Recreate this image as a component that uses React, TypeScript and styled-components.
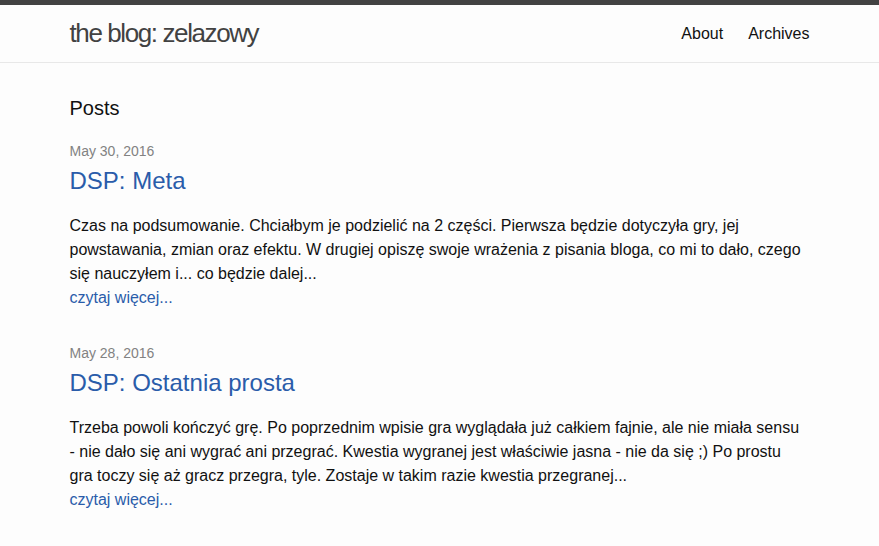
import React from "react";
import styled, { createGlobalStyle } from "styled-components";

const Global = createGlobalStyle`
  html, body { margin: 0; padding: 0; }
  body {
    background: #fdfdfd;
    color: #111;
    font-family: "Liberation Sans", Arial, Helvetica, sans-serif;
    font-size: 16px;
    line-height: 1.5;
    -webkit-font-smoothing: antialiased;
  }
`;

const Header = styled.header`
  border-top: 5px solid #424242;
  border-bottom: 1px solid #e8e8e8;
  min-height: 56px;
`;

const Wrapper = styled.div`
  max-width: 740px;
  margin: 0 auto;
  padding: 0 30px;
`;

const HeaderRow = styled(Wrapper)`
  display: flex;
  justify-content: space-between;
  align-items: center;
  height: 57px;
`;

const SiteTitle = styled.a`
  font-size: 26px;
  font-weight: 300;
  letter-spacing: -1.4px;
  line-height: 57px;
  color: #424242;
  text-decoration: none;
`;

const Nav = styled.nav`
  display: flex;
  gap: 25px;
  line-height: 57px;
`;

const PageLink = styled.a`
  color: #111;
  text-decoration: none;
  font-size: 16px;
`;

const Main = styled.main`
  padding: 30px 0;
`;

const PageHeading = styled.h1`
  font-size: 20px;
  font-weight: 400;
  line-height: 30px;
  margin: 0 0 16px;
`;

const PostList = styled.ul`
  list-style: none;
  margin: 0;
  padding: 0;
`;

const PostItem = styled.li`
  margin-bottom: 31px;
`;

const PostMeta = styled.span`
  display: block;
  font-size: 14px;
  line-height: 24px;
  color: #828282;
`;

const PostTitle = styled.h2`
  font-size: 24px;
  font-weight: 400;
  line-height: 36px;
  margin: 0 0 15px;
`;

const TitleLink = styled.a`
  color: #2a5caa;
  text-decoration: none;
`;

const Excerpt = styled.p`
  margin: 0;
  line-height: 24px;
`;

const NoWrap = styled.span`
  white-space: nowrap;
`;

const ReadMore = styled.a`
  display: block;
  color: #2a5caa;
  text-decoration: none;
  line-height: 24px;
`;

const posts = [
  {
    date: "May 30, 2016",
    title: "DSP: Meta",
    excerpt: (
      <>
        Czas na podsumowanie. Chciałbym je podzielić na 2 części. Pierwsza będzie dotyczyła gry, jej
        powstawania, zmian oraz efektu. W drugiej opiszę swoje wrażenia z pisania bloga, co mi to dało,
        czego się nauczyłem i... co będzie dalej...
      </>
    ),
  },
  {
    date: "May 28, 2016",
    title: "DSP: Ostatnia prosta",
    excerpt: (
      <>
        Trzeba powoli kończyć grę. Po poprzednim wpisie gra wyglądała już całkiem fajnie, ale nie miała
        sensu <NoWrap>- nie</NoWrap> dało się ani wygrać ani przegrać. Kwestia wygranej jest właściwie
        jasna - nie da się ;) Po prostu <NoWrap>gra toczy</NoWrap> się aż gracz przegra, tyle. Zostaje w
        takim razie kwestia przegranej...
      </>
    ),
  },
];

export default function App() {
  return (
    <>
      <Global />
      <Header>
        <HeaderRow>
          <SiteTitle href="#">the blog: zelazowy</SiteTitle>
          <Nav>
            <PageLink href="#">About</PageLink>
            <PageLink href="#">Archives</PageLink>
          </Nav>
        </HeaderRow>
      </Header>
      <Main>
        <Wrapper>
          <PageHeading>Posts</PageHeading>
          <PostList>
            {posts.map((p) => (
              <PostItem key={p.title}>
                <PostMeta>{p.date}</PostMeta>
                <PostTitle>
                  <TitleLink href="#">{p.title}</TitleLink>
                </PostTitle>
                <Excerpt>{p.excerpt}</Excerpt>
                <ReadMore href="#">czytaj więcej...</ReadMore>
              </PostItem>
            ))}
          </PostList>
        </Wrapper>
      </Main>
    </>
  );
}
